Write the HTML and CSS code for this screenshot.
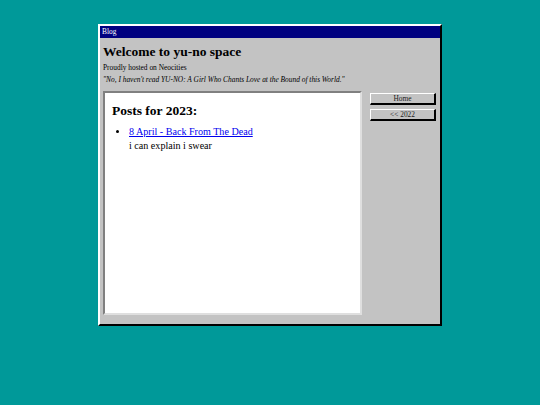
FILE: index.html
```html
<!DOCTYPE html>
<html>
<head>
<meta charset="utf-8">
<link rel="stylesheet" href="styles.css">
</head>
<body>
<div class="window">
  <div class="titlebar">Blog</div>
  <div class="header">
    <h1 class="site-title">Welcome to yu-no space</h1>
    <p class="hosted">Proudly hosted on Neocities</p>
    <p class="quote">"No, I haven't read YU-NO: A Girl Who Chants Love at the Bound of this World."</p>
  </div>
  <div class="main">
    <div class="panel">
      <h2 class="posts-title">Posts for 2023:</h2>
      <ul class="posts">
        <li><a href="#">8 April - Back From The Dead</a><br>i can explain i swear</li>
      </ul>
    </div>
    <div class="sidebar">
      <a class="btn" href="#">Home</a>
      <a class="btn" href="#">&lt;&lt; 2022</a>
    </div>
  </div>
</div>
</body>
</html>
```
FILE: styles.css
```css
html, body {
  margin: 0;
  padding: 0;
}
body {
  background: #009999;
  font-family: "Liberation Serif", "Times New Roman", serif;
  color: #000;
}
.window {
  box-sizing: border-box;
  width: 344px;
  height: 302px;
  margin: 24px auto 0;
  background: #c3c3c3;
  border: 2px solid;
  border-color: #ffffff #000000 #000000 #ffffff;
  display: flex;
  flex-direction: column;
}
.titlebar {
  background: #000080;
  color: #fff;
  font-size: 7.4px;
  height: 12px;
  line-height: 12px;
  padding-left: 2px;
}
.header {
  padding: 0 3px;
}
.site-title {
  font-size: 13.5px;
  font-weight: bold;
  margin: 6px 0 0;
  line-height: 15px;
}
.hosted {
  font-size: 7.4px;
  margin: 4px 0 0;
  line-height: 10px;
}
.quote {
  font-size: 7.4px;
  font-style: italic;
  margin: 2px 0 0;
  line-height: 10px;
}
.main {
  display: flex;
  padding: 6px 4px 0 3px;
  gap: 8px;
}
.panel {
  box-sizing: border-box;
  width: 259px;
  height: 224px;
  background: #fff;
  border: 2px solid;
  border-color: #808080 #dfdfdf #dfdfdf #808080;
  padding: 0 7px;
}
.posts-title {
  font-size: 13.5px;
  font-weight: bold;
  margin: 10px 0 0;
  line-height: 16px;
}
.posts {
  margin: 6px 0 0;
  padding-left: 17px;
  font-size: 10.1px;
  line-height: 14px;
}
.posts a {
  color: #0000ee;
}
.sidebar {
  display: flex;
  flex-direction: column;
  gap: 4px;
  padding-top: 2px;
}
.btn {
  box-sizing: border-box;
  width: 66px;
  height: 12px;
  display: block;
  background: #c3c3c3;
  border: 1px solid;
  border-color: #fff #000 #000 #fff;
  border-right-width: 2px;
  border-bottom-width: 2px;
  font-size: 7.4px;
  line-height: 9px;
  text-align: center;
  color: #222;
  text-decoration: none;
}
```
